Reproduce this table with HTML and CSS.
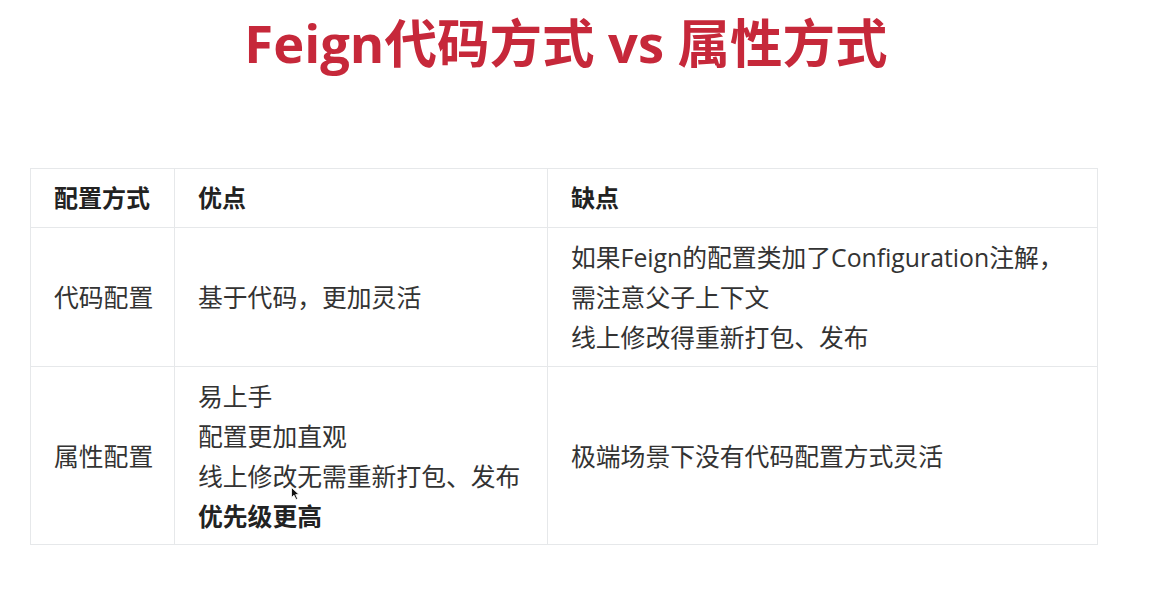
FILE: index.html
```html
<!DOCTYPE html>
<html lang="zh-CN">
<head>
<meta charset="utf-8">
<title>Feign代码方式 vs 属性方式</title>
<link rel="stylesheet" href="styles.css">
</head>
<body>
<div class="page">
  <h1 class="title">Feign代码方式 vs 属性方式</h1>
  <table class="cmp">
    <colgroup>
      <col class="c1"><col class="c2"><col class="c3">
    </colgroup>
    <thead>
      <tr><th>配置方式</th><th>优点</th><th>缺点</th></tr>
    </thead>
    <tbody>
      <tr>
        <td>代码配置</td>
        <td>基于代码，更加灵活</td>
        <td>如果Feign的配置类加了Configuration注解，<br>需注意父子上下文<br>线上修改得重新打包、发布</td>
      </tr>
      <tr class="last">
        <td>属性配置</td>
        <td>易上手<br>配置更加直观<br>线上修改无需重新打包、发布<br><strong>优先级更高</strong></td>
        <td>极端场景下没有代码配置方式灵活</td>
      </tr>
    </tbody>
  </table>
  <svg class="cursor" width="9" height="13" viewBox="0 0 9 13"><path d="M0.5 0.5 L0.5 10.5 L3 8.2 L5 12.5 L6.6 11.8 L4.7 7.6 L8 7.6 Z" fill="#111" stroke="#fff" stroke-width="0.8"/></svg>
</div>
</body>
</html>
```

FILE: styles.css
```css
html, body {
  margin: 0;
  padding: 0;
  background: #ffffff;
}
.page {
  position: relative;
  width: 1157px;
  height: 593px;
  overflow: hidden;
  font-family: "Open Sans", "Noto Sans CJK SC", sans-serif;
  color: #333333;
}
.title {
  margin: 16px 0 0 0;
  padding-right: 25px;
  text-align: center;
  font-family: "Open Sans", "Noto Sans CJK SC", sans-serif;
  font-weight: 700;
  font-size: 52.5px;
  line-height: 53px;
  color: #c6283a;
  letter-spacing: 0;
}
.cmp {
  margin: 99px 0 0 30px;
  width: 1067px;
  border-collapse: collapse;
  table-layout: fixed;
  font-size: 24.8px;
  line-height: 40px;
}
.c1 { width: 144px; }
.c2 { width: 373px; }
.c3 { width: 550px; }
.cmp th, .cmp td {
  border: 1px solid #e6e8ea;
  padding: 9px 23px;
  text-align: left;
  vertical-align: middle;
  white-space: nowrap;
}
.cmp .last td {
  padding-bottom: 8px;
}
.cmp th {
  font-weight: 700;
  font-size: 24px;
  color: #222222;
}
.cmp strong {
  font-weight: 700;
  color: #222222;
}
.cursor {
  position: absolute;
  left: 291px;
  top: 487px;
}
```
